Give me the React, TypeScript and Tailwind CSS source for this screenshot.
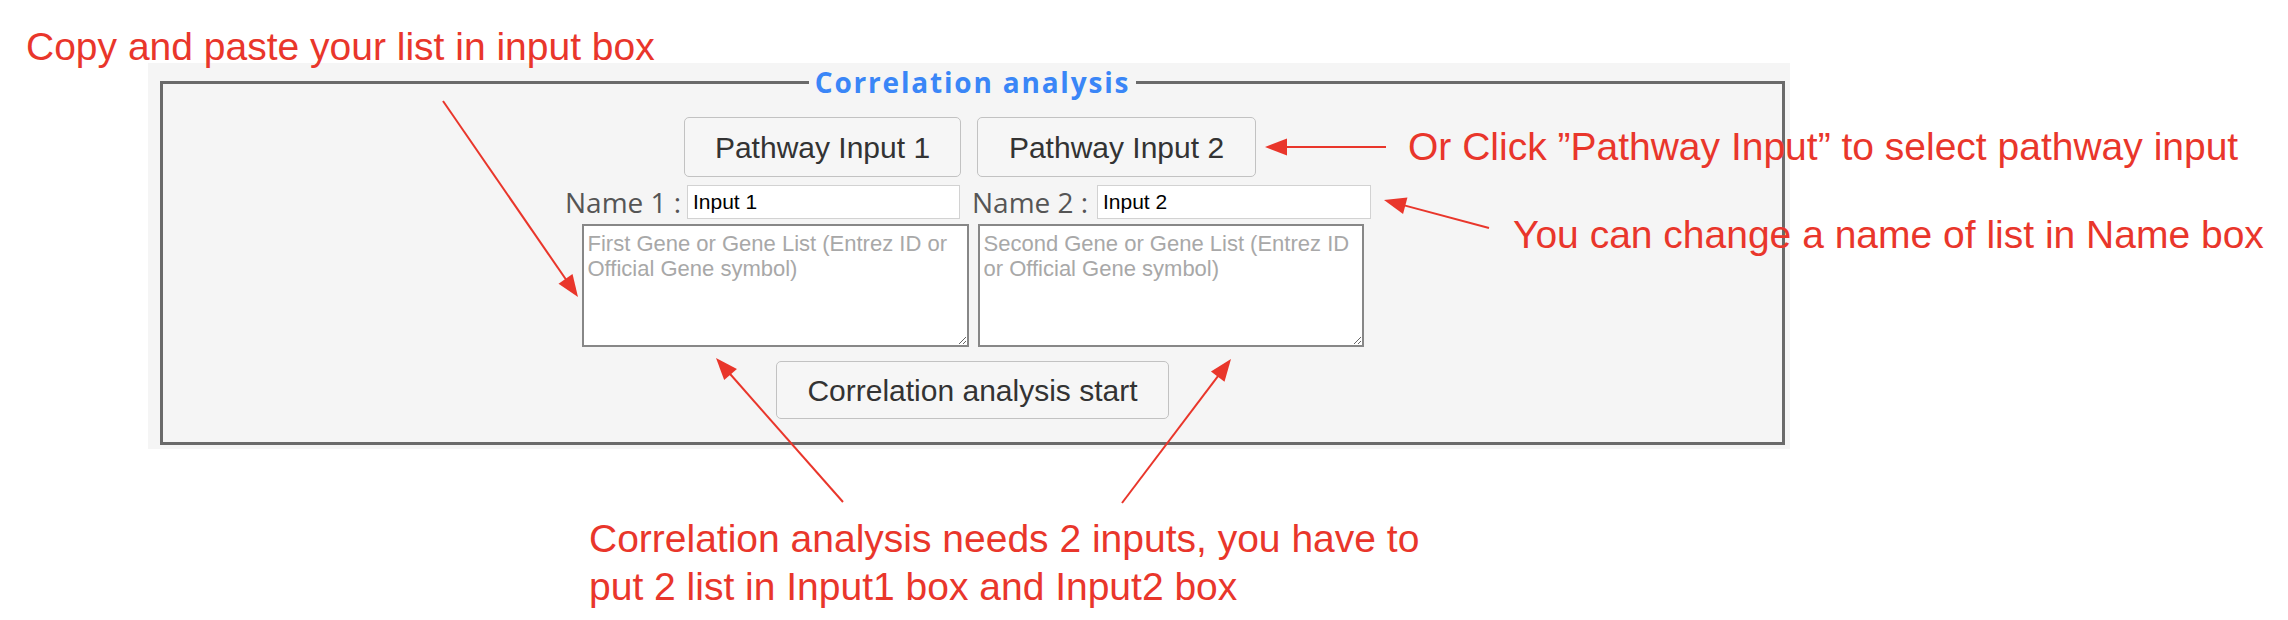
import React from "react";

type Arrow = { x1: number; y1: number; x2: number; y2: number };

const RED = "#e9362b";

const arrows: Arrow[] = [
  { x1: 443, y1: 101, x2: 578, y2: 297 },
  { x1: 1386, y1: 147, x2: 1265, y2: 147 },
  { x1: 1489, y1: 228, x2: 1384, y2: 200 },
  { x1: 843, y1: 502, x2: 716, y2: 358 },
  { x1: 1122, y1: 503, x2: 1231, y2: 359 },
];

function head(a: Arrow, len = 22, half = 8.5) {
  const dx = a.x2 - a.x1;
  const dy = a.y2 - a.y1;
  const d = Math.hypot(dx, dy);
  const ux = dx / d;
  const uy = dy / d;
  const bx = a.x2 - ux * len;
  const by = a.y2 - uy * len;
  const px = -uy * half;
  const py = ux * half;
  return {
    points: `${a.x2},${a.y2} ${bx + px},${by + py} ${bx - px},${by - py}`,
    lx: a.x2 - ux * (len - 2),
    ly: a.y2 - uy * (len - 2),
  };
}

export default function App() {
  return (
    <div className="relative w-[2288px] h-[620px] bg-white overflow-hidden font-['Liberation_Sans',Arial,sans-serif]">
      <div className="pt-[63px] pl-[148px]">
        <div className="w-[1642px] h-[386px] bg-[#f5f5f5] pt-[5px] pl-[12px] pr-[5px] pb-[4px]">
          <fieldset className="h-full border-[3px] border-[#6a6a6a]">
            <legend className="mx-auto px-[6px] h-[28px] leading-[28px] text-[28px] font-bold tracking-[1.8px] text-[#3a86f7] font-['Open_Sans',sans-serif]">
              Correlation analysis
            </legend>
            <div className="flex flex-col items-center pt-[21px]">
              <div className="flex gap-[16px] mr-[5px]">
                <button className="w-[277px] h-[60px] rounded-[5px] border border-[#c2c2c2] bg-[#f6f6f6] text-[30px] text-[#333]">
                  Pathway Input 1
                </button>
                <button className="w-[279px] h-[60px] rounded-[5px] border border-[#c2c2c2] bg-[#f6f6f6] text-[30px] text-[#333]">
                  Pathway Input 2
                </button>
              </div>
              <div className="flex items-center mt-[8px] mr-[9px] h-[34px]">
                <span className="w-[118px] whitespace-nowrap text-[28px] leading-[34px] text-[#555] font-['Open_Sans',sans-serif]">
                  Name 1 :
                </span>
                <input
                  defaultValue="Input 1"
                  className="ml-[4px] w-[273px] h-[34px] border border-[#d2d2d2] bg-white px-[5px] text-[21px] text-black outline-none"
                />
                <span className="ml-[12px] w-[122px] whitespace-nowrap text-[28px] leading-[34px] text-[#555] font-['Open_Sans',sans-serif]">
                  Name 2 :
                </span>
                <input
                  defaultValue="Input 2"
                  className="ml-[3px] w-[274px] h-[34px] border border-[#d2d2d2] bg-white px-[5px] text-[21px] text-black outline-none"
                />
              </div>
              <div className="flex gap-[9px] mt-[5px]">
                <textarea
                  placeholder="First Gene or Gene List (Entrez ID or Official Gene symbol)"
                  className="w-[387px] h-[123px] border-2 border-[#878787] bg-white pl-[4px] pr-[4px] pt-[5px] text-[22px] leading-[25px] placeholder:text-[#a8a8a8] outline-none"
                />
                <textarea
                  placeholder="Second Gene or Gene List (Entrez ID or Official Gene symbol)"
                  className="w-[386px] h-[123px] border-2 border-[#878787] bg-white pl-[4px] pr-[4px] pt-[5px] text-[22px] leading-[25px] placeholder:text-[#a8a8a8] outline-none"
                />
              </div>
              <button className="mt-[14px] w-[393px] h-[58px] rounded-[5px] border border-[#c2c2c2] bg-[#f6f6f6] text-[30px] text-[#333]">
                Correlation analysis start
              </button>
            </div>
          </fieldset>
        </div>
      </div>

      <div className="absolute left-[26px] top-[27px] whitespace-nowrap text-[39px] leading-[39px] text-[#e9362b]">
        Copy and paste your list in input box
      </div>
      <div className="absolute left-[1408px] top-[127px] whitespace-nowrap text-[39px] leading-[39px] text-[#e9362b]">
        Or Click ”Pathway Input” to select pathway input
      </div>
      <div className="absolute left-[1513px] top-[215px] whitespace-nowrap text-[39px] leading-[39px] text-[#e9362b]">
        You can change a name of list in Name box
      </div>
      <div className="absolute left-[589px] top-[515px] whitespace-nowrap text-[39px] leading-[48px] text-[#e9362b]">
        Correlation analysis needs 2 inputs, you have to
        <br />
        put 2 list in Input1 box and Input2 box
      </div>

      <svg className="absolute inset-0 pointer-events-none" width="2288" height="620" viewBox="0 0 2288 620">
        {arrows.map((a, i) => {
          const h = head(a);
          return (
            <g key={i}>
              <line x1={a.x1} y1={a.y1} x2={h.lx} y2={h.ly} stroke={RED} strokeWidth={2} />
              <polygon points={h.points} fill={RED} />
            </g>
          );
        })}
      </svg>
    </div>
  );
}
